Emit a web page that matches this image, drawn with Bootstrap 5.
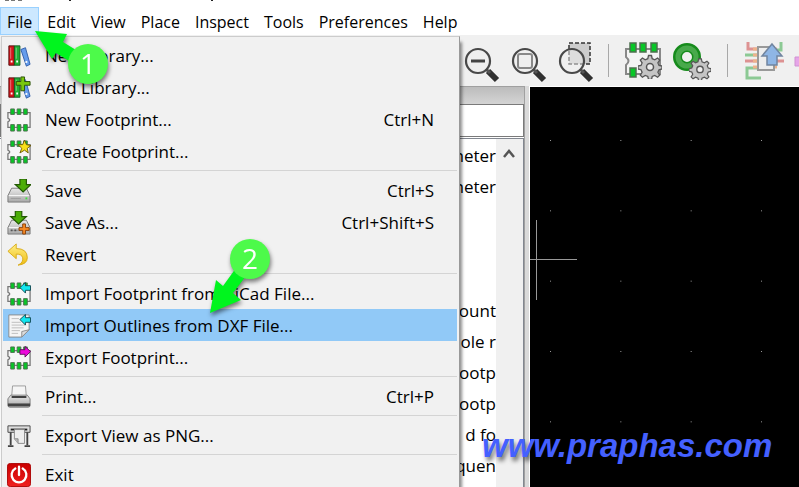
<!DOCTYPE html>
<html lang="en">
<head>
<meta charset="utf-8">
<meta name="viewport" content="width=device-width, initial-scale=1">
<title>Footprint Editor</title>
<link href="https://cdn.jsdelivr.net/npm/bootstrap@5.3.0/dist/css/bootstrap.min.css" rel="stylesheet">
<style>
body{font-family:"Open Sans","Noto Sans",sans-serif;font-size:17px;line-height:24px;color:#000;background:#f0f0f0}
.title-strip{height:7px;background:#fff}
.title-strip svg{display:block}
.menu-bar{height:28px;background:#fff}
.menu-bar .btn{font-size:16px;line-height:24px;padding:2px 6px 0;border:1px solid transparent;border-radius:0;color:#000;margin-right:1px}
.menu-bar .btn.show{background:#cce8ff;border-color:#99d1ff;color:#000}
.tool-bar{height:51px;background:#f0f0f0;padding-left:463px}
.tool-bar button,.plain{border:0;background:none;padding:0}
.tool-bar svg{display:block}
.rule{width:1px;height:33px;background:#a8a8a8}
.work{min-height:0}
.side{width:530px;background:#dadada;border-right:1px solid #fff}
.side-in{width:525px;border-right:1px solid #a0a0a0;background:#fff}
.side-head{height:18px;background:linear-gradient(#bcbcbc,#d4d4d4);border-top:1px solid #a0a0a0}
.side-in input{height:33px;border:1px solid #7a7a7a;border-radius:0;outline:0;width:100%}
.tree{border-top:1px solid #828790;margin-top:1px;border-right:1px solid #828790}
.tree ul{min-width:0;line-height:31px;padding-top:1px;overflow:hidden}
.tree li{height:31px;white-space:nowrap;text-align:right}
.scroll{background:#f0f0f0;width:27px}
.pcb{background:#000;border-top:1px solid #fff;overflow:hidden}
.pcb svg{display:block}
.file-menu{position:absolute;left:1px;top:36px;width:459px;padding:2px 2px 2px 1px;background:#f1f1f1;border:1px solid #ccc;border-right-color:#999;border-radius:0;box-shadow:2px 6px 3px rgba(0,0,0,.45);font-size:17px;z-index:5}
.file-menu .dropdown-item{height:32px;padding:2px 23px 0 4px;color:#000;line-height:30px}
.file-menu .dropdown-item.hot{background:#91c9f7}
.file-menu .dropdown-item svg{width:24px;height:24px;margin-right:14px;flex:none}
.file-menu .dropdown-divider{margin:3px 0 3px 39px;border-top:1px solid #d4d4d4;opacity:1}
.note{position:absolute;z-index:8;pointer-events:none;filter:drop-shadow(1px 3px 2px rgba(0,0,0,.5))}
.note-1{left:30px;top:28px}
.note-2{left:205px;top:236px}
.brand-mark{position:absolute;z-index:6;left:482px;top:426px;font:italic 700 33px/40px "Liberation Sans",sans-serif;color:#4460ff;text-decoration:none;text-shadow:2px 4px 4px rgba(0,0,0,.5)}
</style>
<script src="https://cdn.jsdelivr.net/npm/bootstrap@5.3.0/dist/js/bootstrap.bundle.min.js"></script>
</head>
<body>
<svg width="0" height="0" class="position-absolute" aria-hidden="true">
<defs>
<linearGradient id="gr" x1="0" x2="0" y1="0" y2="1"><stop offset="0" stop-color="#e8e8e8"/><stop offset="1" stop-color="#a8a8a8"/></linearGradient>
<linearGradient id="rd" x1="0" x2="0" y1="0" y2="1"><stop offset="0" stop-color="#c80000"/><stop offset="1" stop-color="#f02020"/></linearGradient>
<linearGradient id="ye" x1="0" x2="0" y1="0" y2="1"><stop offset="0" stop-color="#fff08a"/><stop offset="1" stop-color="#eebc10"/></linearGradient>
<symbol id="books" viewBox="0 0 26 26"><path d="M2 2h6v21H2z" fill="#d5131b" stroke="#55110f"/><path d="M8 2h6v21H8z" fill="#1faf35" stroke="#145a20"/><path d="M15 6l5-2 5 18-4 2z" fill="#659cec" stroke="#305da8"/><path d="M4 4v12M10 4v12" stroke="#fff" stroke-opacity=".45"/><path d="M4 19h2M10 19h2M20 20l2-1" stroke="#fff" stroke-width="2"/></symbol>
<symbol id="fp" viewBox="0 0 26 26"><path d="M4 5H1v6q4 2 0 4v6h24V5H4" fill="#f6f6f6" stroke="#777" stroke-width="1.4"/><path d="M4 1h4v6H4zM11 1h4v6h-4zM18 1h4v6h-4zM4 18h4v7H4zM11 18h4v7h-4zM18 18h4v7h-4z" fill="#07c726" stroke="#4d704f"/></symbol>
<symbol id="down" viewBox="0 0 26 26"><path d="M9 1h7v6h5l-8.500 8L4 7h5z" fill="#4cae08" stroke="#235904" stroke-width="1.300"/></symbol>
<symbol id="disk" viewBox="0 0 26 26"><path d="M5 10h16l4 8v7H1v-7z" fill="url(#gr)" stroke="#777"/><path d="M2 18h22" stroke="#fff"/><path d="M4 21h11" stroke="#999"/></symbol>
<symbol id="gear" viewBox="0 0 24 24"><path d="M10.500 1h3l.7 3.200 2.600 1.100 2.800-1.800 2.100 2.100-1.800 2.800 1.100 2.600 3 .5v3l-3 .7-1.100 2.600 1.800 2.800-2.100 2.100-2.800-1.800-2.600 1.100-.7 3h-3l-.7-3-2.600-1.100-2.800 1.800-2.100-2.100 1.800-2.800L3 15.200l-3-.7v-3l3-.5 1.100-2.600-1.800-2.800 2.100-2.100 2.800 1.800 2.600-1.100z" fill="#c4c4c4" stroke="#555" stroke-width="1.300"/><circle cx="12" cy="12.500" r="3.500" fill="#eee" stroke="#555" stroke-width="1.500"/></symbol>
<symbol id="lens" viewBox="0 0 36 40"><path d="M24 27l9 9" stroke="#303030" stroke-width="6"/><path d="M22 25l4 4" stroke="#555" stroke-width="3"/><circle cx="14" cy="17" r="12" fill="#eee" fill-opacity=".5" stroke="#484848" stroke-width="2.200"/></symbol>
<symbol id="inarr" viewBox="0 0 26 26"><path d="M14 6l6-5.500V4h5.500v5H20v3z" fill="#12e7ef" stroke="#124a52"/></symbol>
</defs></svg>
<div class="d-flex flex-column vh-100 overflow-hidden position-relative">
<div class="title-strip"><svg width="320" height="7" aria-hidden="true"><path d="M5 0h4M11 0h4M18 0h4" stroke="#777" stroke-width="2"/><path d="M70 0v1M212 0v1" stroke="#222" stroke-width="2"/></svg></div>
<nav class="menu-bar d-flex" aria-label="Main">
<button class="btn show" aria-expanded="true">File</button><button class="btn">Edit</button><button class="btn">View</button><button class="btn">Place</button><button class="btn">Inspect</button><button class="btn">Tools</button><button class="btn">Preferences</button><button class="btn">Help</button>
</nav>
<div class="tool-bar d-flex align-items-center flex-shrink-0 overflow-hidden">
<button class="flex-shrink-0" aria-label="Zoom out"><svg width="47" height="50"><use href="#lens" x="1" y="8" width="36" height="40"/><path d="M8 25h14" stroke="#444" stroke-width="3"/></svg></button>
<button class="flex-shrink-0" aria-label="Zoom to fit"><svg width="47" height="50"><use href="#lens" x="1" y="8" width="36" height="40"/><rect x="8" y="18" width="14" height="14" rx="2" fill="#eee" stroke="#888" stroke-width="2"/></svg></button>
<button class="flex-shrink-0" aria-label="Zoom to selection"><svg width="51" height="50"><path d="M12 7h21v21H12z" fill="#ccc" stroke="#333" stroke-width="1.500" stroke-dasharray="4 2"/><use href="#lens" x="1" y="8" width="36" height="40"/></svg></button>
<span class="rule flex-shrink-0"></span>
<button class="flex-shrink-0" aria-label="Footprint properties"><svg width="64" height="50"><path d="M19 13h-2v8q5 4 0 8v9h34V13H19" fill="#f4f4f4" stroke="#888" stroke-width="2"/><path d="M21 7h6v9h-6zM31 7h6v9h-6zM42 7h6v9h-6zM21 32h6v9h-6z" fill="#07c726" stroke="#4d704f" stroke-width="1.500"/><use href="#gear" x="29" y="18" width="24" height="25"/></svg></button>
<button class="flex-shrink-0" aria-label="Pad settings"><svg width="54" height="50"><circle cx="14" cy="21" r="9.500" fill="none" stroke="#168b1c" stroke-width="9"/><circle cx="14" cy="21" r="9" fill="none" stroke="#48a94b" stroke-width="5"/><use href="#gear" x="16" y="22" width="22" height="22"/></svg></button>
<span class="rule flex-shrink-0"></span>
<button class="flex-shrink-0" aria-label="Load from board"><svg width="66" height="50"><g fill="none" stroke-width="3"><path d="M20 6v7h12M17 25h12M44 25h12" stroke="#dd9292"/><path d="M17 19h12M29 32H19v10h14M53 6v8h-6" stroke="#8cc994"/><path d="M25 13h5M25 19h5M25 25h5M25 31h5M45 13h4M45 31h4" stroke="#edb28b"/></g><path d="M30 11h16v23H30z" fill="#eee" stroke="#999" stroke-width="2"/><path d="M44 8l10 12h-5v9H39v-9h-5z" fill="#8fb6e5" stroke="#7185a0" stroke-width="1.500"/></svg></button>
<button class="flex-shrink-0" aria-label="Insert in board"><svg width="20" height="50"><path d="M1 21h15v9H1z" fill="#e6a5e8" stroke="#d092d2"/></svg></button>
</div>
<div class="work d-flex flex-grow-1">
<aside class="side flex-shrink-0"><div class="side-in h-100 d-flex flex-column"><div class="side-head flex-shrink-0"></div><input type="text" aria-label="Filter footprints" class="flex-shrink-0">
<div class="tree d-flex flex-grow-1 overflow-hidden"><ul class="list-unstyled mb-0 flex-grow-1"><li>meter</li><li>meter</li><li></li><li></li><li></li><li>ount</li><li>hole r</li><li>ootp</li><li>ootp</li><li>d fo</li><li>quen</li></ul>
<div class="scroll flex-shrink-0"><button class="plain w-100" aria-label="Scroll up"><svg width="26" height="32"><path d="M7 18l5-6 5 6" fill="none" stroke="#555" stroke-width="2.500"/></svg></button></div></div></div></aside>
<main class="pcb flex-grow-1"><svg width="100%" height="100%" aria-label="Footprint canvas"><defs><pattern id="dots" x="20" y="53" width="70.333" height="70.333" patternUnits="userSpaceOnUse"><path d="M0 0h1v1H0z" fill="#999"/></pattern></defs><rect width="100%" height="100%" fill="url(#dots)"/><path d="M6 133h1v80H6zM0 172h47v1H0z" fill="#999"/></svg></main>
</div>
<div class="file-menu dropdown-menu show">
<button class="dropdown-item d-flex align-items-center"><svg><use href="#books"/></svg>New Library...</button>
<button class="dropdown-item d-flex align-items-center"><svg viewBox="0 0 26 26"><use href="#books"/><path d="M15 1h4v5h6v4h-6v6h-4v-6h-5V6h5z" fill="#79c80d" stroke="#294e08"/></svg>Add Library...</button>
<button class="dropdown-item d-flex align-items-center"><svg><use href="#fp"/></svg>New Footprint...<span class="ms-auto">Ctrl+N</span></button>
<button class="dropdown-item d-flex align-items-center"><svg viewBox="0 0 26 26"><use href="#fp"/><path d="M19 0l2 5 5 1-4 3 1 5-4-3-5 3 2-5-4-4h5z" fill="#f8df19" stroke="#6a5b09"/></svg>Create Footprint...</button>
<hr class="dropdown-divider">
<button class="dropdown-item d-flex align-items-center"><svg viewBox="0 0 26 26"><use href="#disk"/><use href="#down" x="5" y="-1" width="26" height="26"/><path d="M20 20h2v2h-2z" fill="#3be53b"/></svg>Save<span class="ms-auto">Ctrl+S</span></button>
<button class="dropdown-item d-flex align-items-center"><svg viewBox="0 0 26 26"><use href="#disk"/><use href="#down" y="-1"/><path d="M4 20h2v2H4zM8 20h2v2H8z" fill="#555"/><path d="M17 14h3v4h4v3h-4v4h-3v-4h-4v-3h4z" fill="#f98b24" stroke="#833d08"/></svg>Save As...<span class="ms-auto">Ctrl+Shift+S</span></button>
<button class="dropdown-item d-flex align-items-center"><svg viewBox="0 0 26 26"><path d="M10 1v5q12 0 12 10 0 7-10 8 6-3 5-8-1-4-7-4v5L1 9z" fill="url(#ye)" stroke="#d8aa18"/></svg>Revert</button>
<hr class="dropdown-divider">
<button class="dropdown-item d-flex align-items-center"><svg viewBox="0 0 26 26"><use href="#fp"/><use href="#inarr"/></svg>Import Footprint from KiCad File...</button>
<button class="dropdown-item hot d-flex align-items-center"><svg viewBox="0 0 26 26"><path d="M2 1h22v16l-8 8H2z" fill="#f5f5f5" stroke="#888"/><path d="M16 25v-6l8-2z" fill="#ddd" stroke="#888"/><path d="M5 5h8M5 9h10M5 12h15M5 15h13M5 18h9M5 21h7" stroke="#bbb"/><use href="#inarr"/></svg>Import Outlines from DXF File...</button>
<button class="dropdown-item d-flex align-items-center"><svg viewBox="0 0 26 26"><use href="#fp"/><path d="M25.500 6l-6-5.500V4H14v5h5.500v3z" fill="#ed09db" stroke="#5c1058"/></svg>Export Footprint...</button>
<hr class="dropdown-divider">
<button class="dropdown-item d-flex align-items-center"><svg viewBox="0 0 26 26"><path d="M6 1h14l1 12H5z" fill="#f5f5f5" stroke="#999"/><path d="M4 11h18l3 4v7q0 2-2 2H3q-2 0-2-2v-7z" fill="url(#gr)" stroke="#777"/><path d="M5 13h16" stroke="#333" stroke-width="2"/><path d="M1 20h24v3H1z" fill="#444"/></svg>Print...<span class="ms-auto">Ctrl+P</span></button>
<hr class="dropdown-divider">
<button class="dropdown-item d-flex align-items-center"><svg viewBox="0 0 26 26"><path d="M4 8v15M22 8v15" stroke="#444" stroke-width="2"/><path d="M1 24h6M19 24h6" stroke="#444" stroke-width="2"/><path d="M1 2h24v7H1z" fill="#ddd" stroke="#444"/><path d="M4 6h18" stroke="#222" stroke-width="2"/><path d="M8 6h11v15h-7l-4-5z" fill="#eee" stroke="#888"/><path d="M8 16h4v5" fill="#bbb" stroke="#888"/></svg>Export View as PNG...</button>
<hr class="dropdown-divider">
<button class="dropdown-item d-flex align-items-center"><svg viewBox="0 0 26 26"><rect x=".5" y=".5" width="25" height="25" rx="3" fill="url(#rd)" stroke="#a90000"/><path d="M9 6a8 8 0 1 0 8 0M13 4v9" fill="none" stroke="#fff" stroke-width="2.500" stroke-linecap="round"/></svg>Exit</button>
</div>
<svg class="note note-1" width="90" height="62" role="img" aria-label="Step 1"><path d="M5 3l32 3-4 8 13 8-7 11-13-8-4 6z" fill="#00f51e"/><circle cx="58" cy="36" r="20" fill="#4dfa4a"/><text x="58" y="46" text-anchor="middle" font-family="Open Sans" font-size="28" fill="#fff">1</text></svg>
<svg class="note note-2" width="75" height="84" role="img" aria-label="Step 2"><path d="M5 77l6-33 7 6 13-18 10 8-13 17 8 7z" fill="#00f51e"/><circle cx="45" cy="23" r="20" fill="#4dfa4a"/><text x="45" y="33" text-anchor="middle" font-family="Open Sans" font-size="28" fill="#fff">2</text></svg>
<a href="#" class="brand-mark">www.praphas.com</a>
</div>
</body>
</html>
